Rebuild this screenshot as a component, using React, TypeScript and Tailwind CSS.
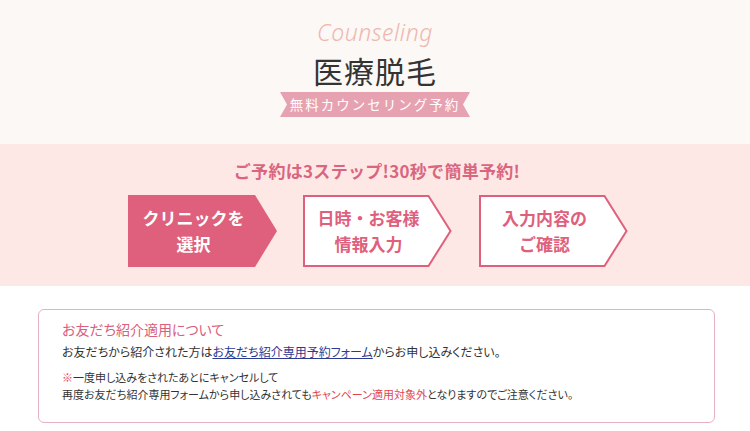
import React from "react";

const JP = { fontFamily: '"Noto Sans CJK JP", "Noto Sans", sans-serif' };

function Step({ lines, active }: { lines: string[]; active?: boolean }) {
  return (
    <div className="relative w-[149px] h-[72px] shrink-0">
      <svg className="absolute inset-0" width="149" height="72" viewBox="0 0 149 72">
        {active ? (
          <polygon points="0,0 127,0 149,36 127,72 0,72" fill="#df607d" />
        ) : (
          <polygon
            points="1,1 125.5,1 147.5,36 125.5,71 1,71"
            fill="#ffffff"
            stroke="#df607d"
            strokeWidth="2"
          />
        )}
      </svg>
      <div
        className={`relative h-full flex flex-col items-center justify-center pr-[18px] text-[17px] font-bold leading-[26px] ${
          active ? "text-white" : "text-[#df607d]"
        }`}
      >
        {lines.map((l) => (
          <span key={l}>{l}</span>
        ))}
      </div>
    </div>
  );
}

export default function App() {
  return (
    <div className="w-[750px] h-[431px] overflow-hidden bg-white" style={JP}>
      <section className="h-[144px] bg-[#fbf8f6] flex flex-col items-center pt-[18px]">
        <div
          className="h-[28px] leading-[28px] text-[23px] italic font-light text-[#f0b6ad] tracking-[0.5px]"
          style={{ fontFamily: '"Noto Sans", sans-serif' }}
        >
          Counseling
        </div>
        <div className="mt-[6px] h-[36px] leading-[36px] text-[30px] text-[#333333] tracking-[1px]">
          医療脱毛
        </div>
        <div
          className="mt-[4px] h-[25px] w-[190px] bg-[#e7a2b1] flex items-center justify-center text-white text-[13.5px] tracking-[2px]"
          style={{
            clipPath:
              "polygon(0 0, 100% 0, calc(100% - 7px) 50%, 100% 100%, 0 100%, 7px 50%)",
          }}
        >
          無料カウンセリング予約
        </div>
      </section>

      <section className="h-[142px] bg-[#fde8e5] pt-[15px]">
        <div className="h-[24px] leading-[24px] text-center text-[17px] font-bold text-[#d9657f] pl-[4px] tracking-[0.3px]">
          ご予約は3ステップ!30秒で簡単予約!
        </div>
        <div className="mt-[12px] flex pl-[128px] gap-[26px]">
          <Step lines={["クリニックを", "選択"]} active />
          <Step lines={["日時・お客様", "情報入力"]} />
          <div className="ml-[1px]">
            <Step lines={["入力内容の", "ご確認"]} />
          </div>
        </div>
      </section>

      <section className="pt-[23px] px-[38px] w-[753px]">
        <div className="w-[677px] h-[114px] border border-[#e6b2c2] rounded-[6px] pl-[23px] pt-[9px] text-[#333333] [font-feature-settings:'palt']">
          <div className="text-[14px] leading-[20px] text-[#d9607c]">
            お友だち紹介適用について
          </div>
          <div className="mt-[4px] text-[12px] leading-[17px]">
            お友だちから紹介された方は
            <span className="text-[#2b3a92] underline">お友だち紹介専用予約フォーム</span>
            からお申し込みください。
          </div>
          <div className="mt-[9px] text-[11px] leading-[17px]">
            <span className="text-[#e2454f]">※</span>
            一度申し込みをされたあとにキャンセルして
          </div>
          <div className="text-[11px] leading-[17px]">
            再度お友だち紹介専用フォームから申し込みされても
            <span className="text-[#e2454f]">キャンペーン適用対象外</span>
            となりますのでご注意ください。
          </div>
        </div>
      </section>
    </div>
  );
}
